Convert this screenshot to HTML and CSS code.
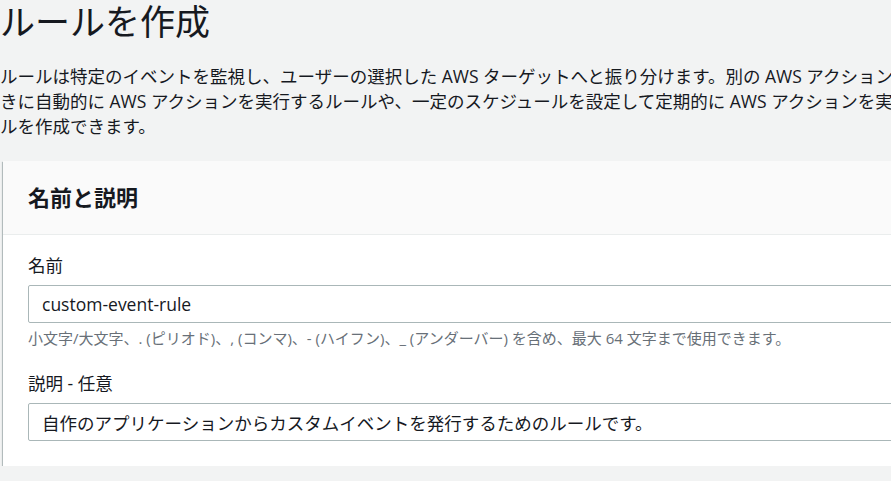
FILE: index.html
```html
<!DOCTYPE html>
<html lang="ja">
<head>
  <meta charset="UTF-8">
  <title>ルールを作成</title>
  <meta name="viewport" content="width=device-width, initial-scale=1">
  <link rel="stylesheet" href="styles.css">
</head>
<body>
  <div class="page">
    <h1>ルールを作成</h1>
    <p class="intro">ルールは特定のイベントを監視し、ユーザーの選択した AWS ターゲットへと振り分けます。別の AWS アクションが発生したときに自動的に AWS アクションを実行するルールや、一定のスケジュールを設定して定期的に AWS アクションを実行するルー<br>ルを作成できます。</p>

    <div class="card">
      <div class="card-header">
        <h2>名前と説明</h2>
      </div>
      <div class="card-body">
        <div class="field">
          <label for="ruleName">名前</label>
          <input type="text" id="ruleName" value="custom-event-rule">
          <div class="hint">小文字/大文字、. (ピリオド)、, (コンマ)、- (ハイフン)、_ (アンダーバー) を含め、最大 64 文字まで使用できます。</div>
        </div>
        <div class="field">
          <label for="ruleDesc">説明 - 任意</label>
          <input type="text" id="ruleDesc" value="自作のアプリケーションからカスタムイベントを発行するためのルールです。">
        </div>
      </div>
    </div>
  </div>
</body>
</html>
```

FILE: styles.css
```css
body {
  margin: 0;
  font-family: 'Open Sans', 'Noto Sans CJK JP', sans-serif;
  background: #f2f3f3;
  color: #16191f;
  overflow: hidden;
}
.page {
  width: 1100px;
}
h1 {
  margin: 0;
  font-size: 35px;
  font-weight: 400;
  line-height: 44px;
}
.intro {
  width: 998px;
  margin: 20px 0 22px;
  font-size: 17.5px;
  line-height: 25px;
}
.card {
  margin-left: 3px;
  background: #fff;
  box-shadow: 0 1px 1px 0 rgba(0,28,36,0.45), 1px 1px 1px 0 rgba(0,28,36,0.2), -1px 1px 1px 0 rgba(0,28,36,0.2);
}
.card-header {
  background: #fafafa;
  border-bottom: 1px solid #eaeded;
  padding: 21px 25px;
}
.card-header h2 {
  margin: 0;
  font-size: 22px;
  font-weight: 700;
  line-height: 31px;
}
.card-body {
  padding: 18px 25px 25px;
}
.field + .field {
  margin-top: 22px;
}
.field label {
  display: block;
  font-size: 17.5px;
  line-height: 24px;
  margin-bottom: 8px;
}
.field input {
  display: block;
  width: 100%;
  height: 38px;
  box-sizing: border-box;
  padding: 0 13px;
  border: 1px solid #aab7b8;
  border-radius: 2px;
  font-family: inherit;
  font-size: 17.5px;
  color: #16191f;
  background: #fff;
}
.hint {
  margin-top: 4px;
  font-size: 15px;
  line-height: 22px;
  color: #687078;
}
```
